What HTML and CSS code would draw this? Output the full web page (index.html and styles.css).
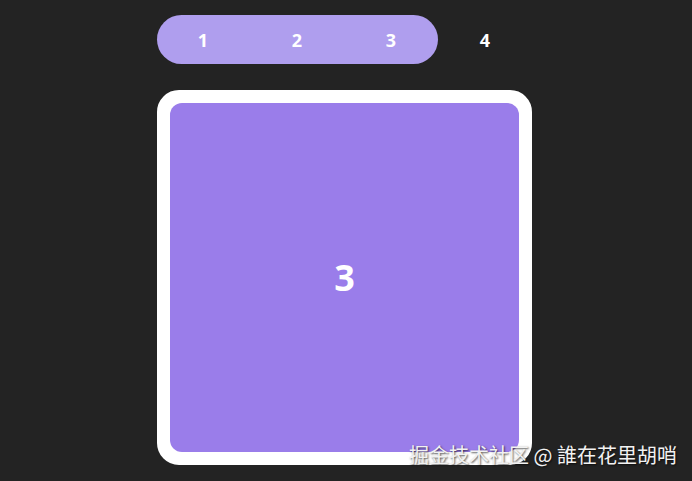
FILE: index.html
```html
<!DOCTYPE html>
<html>
<head>
<meta charset="utf-8">
<link rel="stylesheet" href="styles.css">
</head>
<body>
<div class="wrap">
  <div class="tabs">
    <div class="pill"></div>
    <div class="tab">1</div>
    <div class="tab">2</div>
    <div class="tab">3</div>
    <div class="tab">4</div>
  </div>
  <div class="card">
    <div class="panel">3</div>
  </div>
</div>
<div class="mark">掘金技术社区 @ 誰在花里胡哨</div>
</body>
</html>
```
FILE: styles.css
```css
html, body {
  margin: 0;
  padding: 0;
  background: #232323;
  width: 692px;
  height: 481px;
  overflow: hidden;
  font-family: "Open Sans", "Noto Sans", sans-serif;
}
.wrap {
  padding: 15px 0 0 156px;
  width: 376px;
}
.tabs {
  position: relative;
  display: flex;
  height: 49px;
}
.pill {
  position: absolute;
  left: 1px;
  top: 0;
  width: 281px;
  height: 49px;
  border-radius: 25px;
  background: #af9eee;
}
.tab {
  position: relative;
  width: 94px;
  display: flex;
  align-items: center;
  justify-content: center;
  color: #fff;
  font-weight: 700;
  font-size: 18px;
}
.card {
  margin: 26px 0 0 1px;
  width: 349px;
  height: 349px;
  border: 13px solid #fff;
  border-radius: 22px;
  background: #fff;
}
.panel {
  width: 100%;
  height: 100%;
  background: #9a7dea;
  border-radius: 12px;
  display: flex;
  align-items: center;
  justify-content: center;
  color: #fff;
  font-weight: 700;
  font-size: 36px;
}
.mark {
  position: absolute;
  right: 15px;
  bottom: 14px;
  color: #f2f2f2;
  font-family: "Noto Sans CJK SC", "Noto Sans", sans-serif;
  font-size: 20px;
  line-height: 24px;
  text-shadow: 1px 1px 2px rgba(0,0,0,0.7);
}
```
